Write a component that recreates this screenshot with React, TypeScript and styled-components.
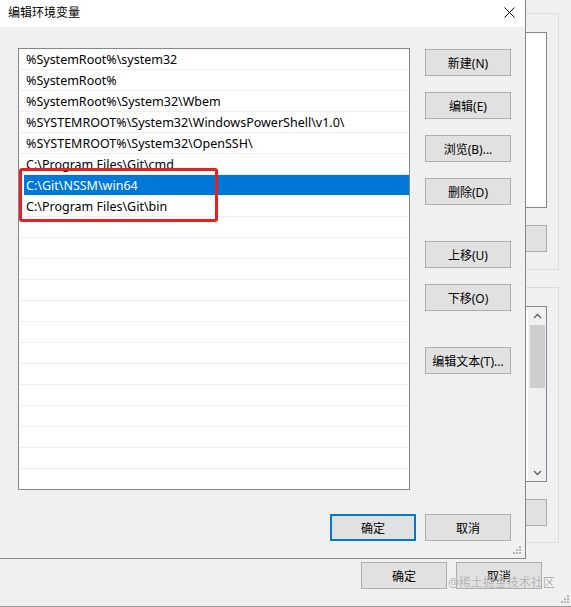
import React from "react";
import styled, { createGlobalStyle } from "styled-components";

const GlobalStyle = createGlobalStyle`
  html, body { margin: 0; padding: 0; }
  body {
    background: #f0f0f0;
    font-family: "Noto Sans", "Noto Sans CJK SC", sans-serif;
    font-size: 12px;
    color: #000;
  }
  * { box-sizing: border-box; }
`;

const Desktop = styled.div`
  position: relative;
  width: 571px;
  height: 607px;
  overflow: hidden;
  background: #f0f0f0;
`;

/* ---------- background window ---------- */
const BackWindow = styled.div`
  position: absolute;
  inset: 0;
  display: flex;
  flex-direction: column;
  align-items: flex-end;
  padding: 13px 12px 0 0;
  background: #f0f0f0;
  border-bottom: 1px solid #9a9a9a;
`;

const GroupBox = styled.div<{ $height: number; $top: number }>`
  width: 300px;
  height: ${(p) => p.$height}px;
  margin-top: ${(p) => p.$top}px;
  border: 1px solid #dcdcdc;
  display: flex;
  flex-direction: column;
  align-items: flex-end;
  padding: 18px 11px 0 0;
`;

const BackList = styled.div`
  width: 260px;
  height: 176px;
  background: #fff;
  border: 1px solid #828790;
  display: flex;
  justify-content: flex-end;
`;

const ScrollBar = styled.div`
  width: 18px;
  height: 100%;
  background: #f0f0f0;
  display: flex;
  flex-direction: column;
  padding-left: 1px;
`;

const ArrowBox = styled.div`
  height: 17px;
  display: flex;
  align-items: center;
  justify-content: center;
`;

const Thumb = styled.div`
  margin: 1px 1px 0 1px;
  height: 63px;
  background: #cdcdcd;
`;

const Spacer = styled.div`
  flex: 1;
`;

const BackButton = styled.div<{ $top: number }>`
  width: 86px;
  height: 27px;
  margin-top: ${(p) => p.$top}px;
  background: #e1e1e1;
  border: 1px solid #adadad;
`;

const BackFooter = styled.div`
  display: flex;
  gap: 9px;
  margin-top: 19px;
  margin-right: 17px;
`;

const Button = styled.div<{ $primary?: boolean }>`
  width: 86px;
  height: 27px;
  background: #e1e1e1;
  border: ${(p) => (p.$primary ? "2px solid #0078d7" : "1px solid #adadad")};
  display: flex;
  align-items: center;
  justify-content: center;
  font-size: 12px;
  white-space: nowrap;
  color: #000;
`;

const Grip = styled.svg<{ $right: number; $bottom: number }>`
  position: absolute;
  right: ${(p) => p.$right}px;
  bottom: ${(p) => p.$bottom}px;
`;

/* ---------- foreground dialog ---------- */
const Dialog = styled.div`
  position: absolute;
  left: 0;
  top: 0;
  width: 526px;
  height: 559px;
  background: #f0f0f0;
  border-right: 1px solid #858585;
  border-bottom: 1px solid #858585;
  display: flex;
  flex-direction: column;
`;

const TitleBar = styled.div`
  height: 27px;
  background: #fff;
  display: flex;
  align-items: center;
  justify-content: space-between;
  padding: 0 10px 3px 8px;
`;

const Title = styled.span`
  font-size: 12px;
  color: #000;
`;

const Body = styled.div`
  flex: 1;
  display: flex;
  flex-direction: column;
  padding: 21px 14px 0 18px;
`;

const MainRow = styled.div`
  display: flex;
  gap: 15px;
`;

const ListBox = styled.div`
  width: 392px;
  height: 442px;
  background: #fff;
  border: 1px solid #828790;
  overflow: hidden;
  font-size: 12.5px;
`;

const Row = styled.div`
  height: 21px;
  border-bottom: 1px solid #efefef;
  padding-left: 5px;
  display: flex;
`;

const Cell = styled.div<{ $selected?: boolean }>`
  flex: 1;
  display: flex;
  align-items: center;
  padding-left: 2px;
  white-space: nowrap;
  background: ${(p) => (p.$selected ? "#0078d7" : "transparent")};
  color: ${(p) => (p.$selected ? "#fff" : "#000")};
`;

const SideButtons = styled.div`
  display: flex;
  flex-direction: column;
  gap: 36px;
  padding-top: 1px;
`;

const ButtonGroup = styled.div`
  display: flex;
  flex-direction: column;
  gap: 16px;
`;

const Footer = styled.div`
  display: flex;
  justify-content: flex-end;
  gap: 9px;
  padding-top: 24px;
`;

const Annotation = styled.div`
  position: absolute;
  left: 19px;
  top: 168px;
  width: 199px;
  height: 54px;
  border: 3px solid #e02424;
  border-radius: 3px;
  pointer-events: none;
`;

const Watermark = styled.div`
  position: absolute;
  left: 448px;
  top: 573px;
  font-size: 12px;
  color: rgba(150, 150, 150, 0.75);
  white-space: nowrap;
  text-shadow: 0 0 1px rgba(255, 255, 255, 0.9);
`;

const paths = [
  "%SystemRoot%\\system32",
  "%SystemRoot%",
  "%SystemRoot%\\System32\\Wbem",
  "%SYSTEMROOT%\\System32\\WindowsPowerShell\\v1.0\\",
  "%SYSTEMROOT%\\System32\\OpenSSH\\",
  "C:\\Program Files\\Git\\cmd",
  "C:\\Git\\NSSM\\win64",
  "C:\\Program Files\\Git\\bin",
];
const rows = [...paths, ...Array(13).fill("")];

const GripDots = ({ right, bottom }: { right: number; bottom: number }) => (
  <Grip $right={right} $bottom={bottom} width="8" height="8" viewBox="0 0 8 8">
    {[
      [6, 0],
      [3, 3],
      [6, 3],
      [0, 6],
      [3, 6],
      [6, 6],
    ].map(([x, y], i) => (
      <rect key={i} x={x} y={y} width="2" height="2" fill="#b5b5b5" />
    ))}
  </Grip>
);

const Chevron = ({ up }: { up?: boolean }) => (
  <svg width="9" height="6" viewBox="0 0 9 6">
    <path
      d={up ? "M1 5 L4.5 1.5 L8 5" : "M1 1 L4.5 4.5 L8 1"}
      fill="none"
      stroke="#606060"
      strokeWidth="1.3"
    />
  </svg>
);

export default function App() {
  return (
    <>
      <GlobalStyle />
      <Desktop>
        <BackWindow>
          <GroupBox $height={257} $top={0}>
            <BackList />
            <BackButton $top={17} />
          </GroupBox>
          <GroupBox $height={256} $top={17}>
            <BackList>
              <ScrollBar>
                <ArrowBox>
                  <Chevron up />
                </ArrowBox>
                <Thumb />
                <Spacer />
                <ArrowBox>
                  <Chevron />
                </ArrowBox>
              </ScrollBar>
            </BackList>
            <BackButton $top={17} />
          </GroupBox>
          <BackFooter>
            <Button>确定</Button>
            <Button>取消</Button>
          </BackFooter>
          <GripDots right={2} bottom={3} />
        </BackWindow>

        <Dialog>
          <TitleBar>
            <Title>编辑环境变量</Title>
            <svg width="11" height="11" viewBox="0 0 11 11">
              <path d="M0.5 0.5 L10.5 10.5 M10.5 0.5 L0.5 10.5" stroke="#000" strokeWidth="1" />
            </svg>
          </TitleBar>
          <Body>
            <MainRow>
              <ListBox>
                {rows.map((r, i) => (
                  <Row key={i}>
                    <Cell $selected={i === 6}>{r}</Cell>
                  </Row>
                ))}
              </ListBox>
              <SideButtons>
                <ButtonGroup>
                  <Button>新建(N)</Button>
                  <Button>编辑(E)</Button>
                  <Button>浏览(B)...</Button>
                  <Button>删除(D)</Button>
                </ButtonGroup>
                <ButtonGroup>
                  <Button>上移(U)</Button>
                  <Button>下移(O)</Button>
                </ButtonGroup>
                <ButtonGroup>
                  <Button>编辑文本(T)...</Button>
                </ButtonGroup>
              </SideButtons>
            </MainRow>
            <Footer>
              <Button $primary>确定</Button>
              <Button>取消</Button>
            </Footer>
          </Body>
          <Annotation />
          <GripDots right={4} bottom={4} />
        </Dialog>
        <Watermark>@稀土掘金技术社区</Watermark>
      </Desktop>
    </>
  );
}
